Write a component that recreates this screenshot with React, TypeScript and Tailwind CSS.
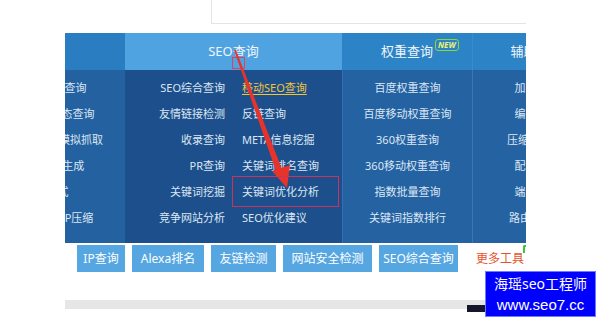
import React from "react";

const col1 = ["网站备案号查询", "网站HTTP状态查询", "搜索引擎蜘蛛模拟抓取", "robots.txt生成", "CSS格式", "网站页面GZIP压缩"];
const seoLeft = ["SEO综合查询", "友情链接检测", "收录查询", "PR查询", "关键词挖掘", "竞争网站分析"];
const seoRight = ["移动SEO查询", "反链查询", "META信息挖掘", "关键词排名查询", "关键词优化分析", "SEO优化建议"];
const weight = ["百度权重查询", "百度移动权重查询", "360权重查询", "360移动权重查询", "指数批量查询", "关键词指数排行"];
const tools = ["加密解密", "编码转换", "压缩/格式化", "配色工具", "端口扫描", "路由器追踪"];

const buttons = [
  { label: "IP查询", w: "w-[48px]" },
  { label: "Alexa排名", w: "w-[72px]" },
  { label: "友链检测", w: "w-[65px]" },
  { label: "网站安全检测", w: "w-[89px]" },
  { label: "SEO综合查询", w: "w-[79px]" },
];

const Row = ({ children, className = "" }: { children: React.ReactNode; className?: string }) => (
  <div className={`h-[26px] leading-[26px] whitespace-nowrap ${className}`}>{children}</div>
);

export default function App() {
  return (
    <div className="relative w-[600px] h-[321px] overflow-hidden bg-white font-['Noto_Sans','Noto_Sans_CJK_SC',sans-serif]">
      {/* search box edge */}
      <div className="ml-[211px] w-[315px] h-[24px] border-l border-b border-[#e4e4e4]" />

      {/* menu panel */}
      <div className="ml-[65px] mt-[9px] w-[461px] overflow-hidden">
        <div className="flex w-max ml-[-94px]">
          <div className="w-[154px] flex flex-col">
            <div className="h-[37px] bg-[#2b7dc1]" />
            <div className="h-[173px] bg-[#2461a1] pt-[5px] text-[11px] text-[#dde7f3] text-center">
              {col1.map((t) => (
                <Row key={t}>{t}</Row>
              ))}
            </div>
          </div>

          <div className="w-[217px] flex flex-col">
            <div className="h-[37px] bg-[#4fa3e1] flex items-center justify-center text-[13px] text-[#f0f6fc]">SEO查询</div>
            <div className="h-[173px] bg-[#1c4f8b] pt-[5px] text-[11px] text-[#dde7f3] flex">
              <div className="w-[108px] pr-[8px] text-right">
                {seoLeft.map((t) => (
                  <Row key={t}>{t}</Row>
                ))}
              </div>
              <div className="w-[109px] pl-[9px]">
                {seoRight.map((t, i) => (
                  <Row key={t} className={i === 0 ? "text-[#f4c53a]" : ""}>
                    {i === 0 ? <span className="underline underline-offset-2">{t}</span> : t}
                  </Row>
                ))}
              </div>
            </div>
          </div>

          <div className="w-[130px] flex flex-col">
            <div className="h-[37px] bg-[#2c84c6] flex items-center justify-center text-[13px] text-[#eef4fa]">
              <span className="relative leading-[13px]">
                权重查询
                <span className="absolute left-full ml-[2px] top-[-6px] px-[2px] h-[12px] leading-[10px] rounded-[3px] border border-[#8fd43c] text-[8px] italic font-bold text-[#eef46a]">
                  NEW
                </span>
              </span>
            </div>
            <div className="h-[173px] bg-[#2462a2] border-l border-[#3270ae] pt-[5px] text-[11px] text-[#dde7f3] text-center">
              {weight.map((t) => (
                <Row key={t}>{t}</Row>
              ))}
            </div>
          </div>

          <div className="w-[128px] flex flex-col">
            <div className="h-[37px] bg-[#2c84c6] border-l border-[#3a8ccc] flex items-center justify-center text-[13px] text-[#eef4fa]">辅助工具</div>
            <div className="h-[173px] bg-[#2462a2] border-l border-[#3a78b4] pt-[5px] text-[11px] text-[#dde7f3] text-center">
              {tools.map((t) => (
                <Row key={t}>{t}</Row>
              ))}
            </div>
          </div>
        </div>
      </div>

      {/* quick buttons */}
      <div className="ml-[65px] mt-[2px] w-[461px] h-[27px] overflow-hidden flex items-stretch gap-[7px] pl-[12px]">
        {buttons.map((b) => (
          <div key={b.label} className={`${b.w} shrink-0 bg-[#56a6e1] text-white text-[12px] flex items-center justify-center whitespace-nowrap`}>
            {b.label}
          </div>
        ))}
        <div className="relative ml-[11px] shrink-0 flex items-center text-[12px] text-[#e5532b] whitespace-nowrap">
          更多工具
          <span className="absolute left-full ml-[-1px] top-0 w-[6px] h-[8px] border-l-2 border-t-2 border-[#3cc43c] rounded-tl-[2px]" />
        </div>
      </div>

      {/* scroll bar */}
      <div className="ml-[65px] mt-[28px] w-[420px] h-[9px] bg-[#e6e6e6]" />
      <div className="absolute left-[467px] top-[305px] w-[20px] h-[7px] bg-[#15162b]" />

      {/* watermark */}
      <div className="absolute left-[485px] top-[271px] w-[111px] h-[46px] bg-[#0000ff] border border-[#6f7cff] flex flex-col items-center justify-center text-white leading-[21px]">
        <div className="text-[14px]">海瑶seo工程师</div>
        <div className="text-[15px] font-['Liberation_Sans',sans-serif]">www.seo7.cc</div>
      </div>

      {/* red annotations */}
      <svg className="absolute inset-0 pointer-events-none" width="600" height="321" viewBox="0 0 600 321">
        <rect x="232.5" y="57.5" width="12" height="11" fill="none" stroke="#e0405a" strokeWidth="1" />
        <polygon points="234,50 236,50 283,172 277,174" fill="#e8332a" />
        <polygon points="287,188 272,171 290,165" fill="#e8332a" />
        <rect x="232.5" y="176.5" width="106" height="30" fill="none" stroke="#c8345e" strokeWidth="1" />
      </svg>
    </div>
  );
}
